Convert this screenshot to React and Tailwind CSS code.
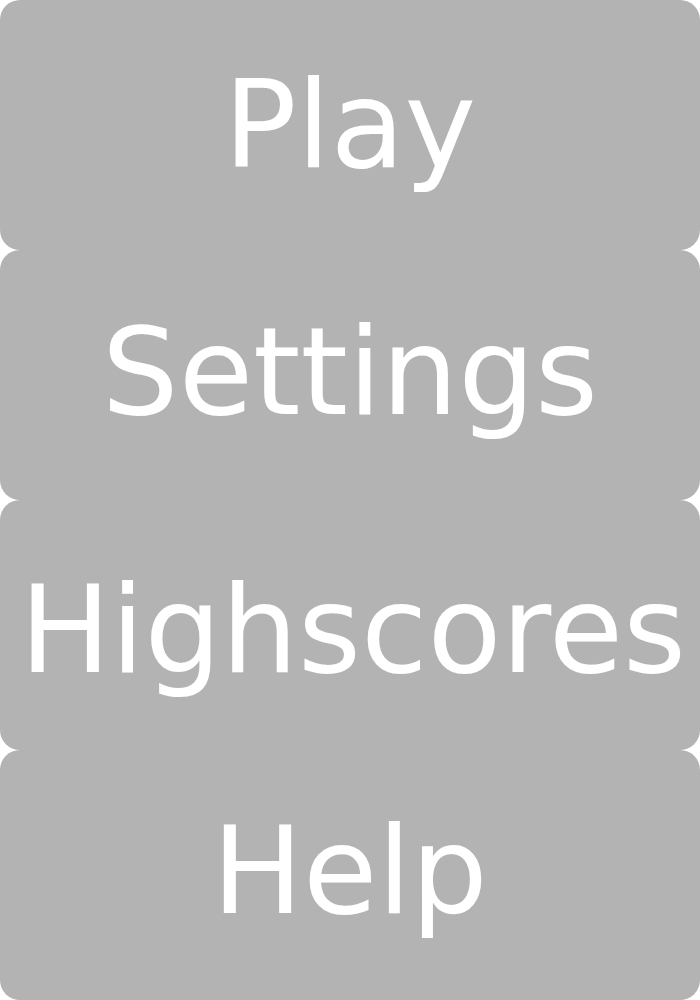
export default function App() {
  const items = [
    { label: 'Play', cls: 'pt-0' },
    { label: 'Settings', cls: 'pb-[6px]' },
    { label: 'Highscores', cls: 'pt-[10px] pl-[6px]' },
    { label: 'Help', cls: 'pb-[8px]' },
  ];
  return (
    <div className="flex flex-col w-[700px] h-[1000px] bg-white" style={{ fontFamily: '"DejaVu Sans", sans-serif' }}>
      {items.map(item => (
        <button
          key={item.label}
          className={`h-[250px] w-full flex items-center justify-center rounded-[20px] bg-[#b3b3b3] text-white text-[121px] leading-none ${item.cls}`}
        >
          {item.label}
        </button>
      ))}
    </div>
  );
}
